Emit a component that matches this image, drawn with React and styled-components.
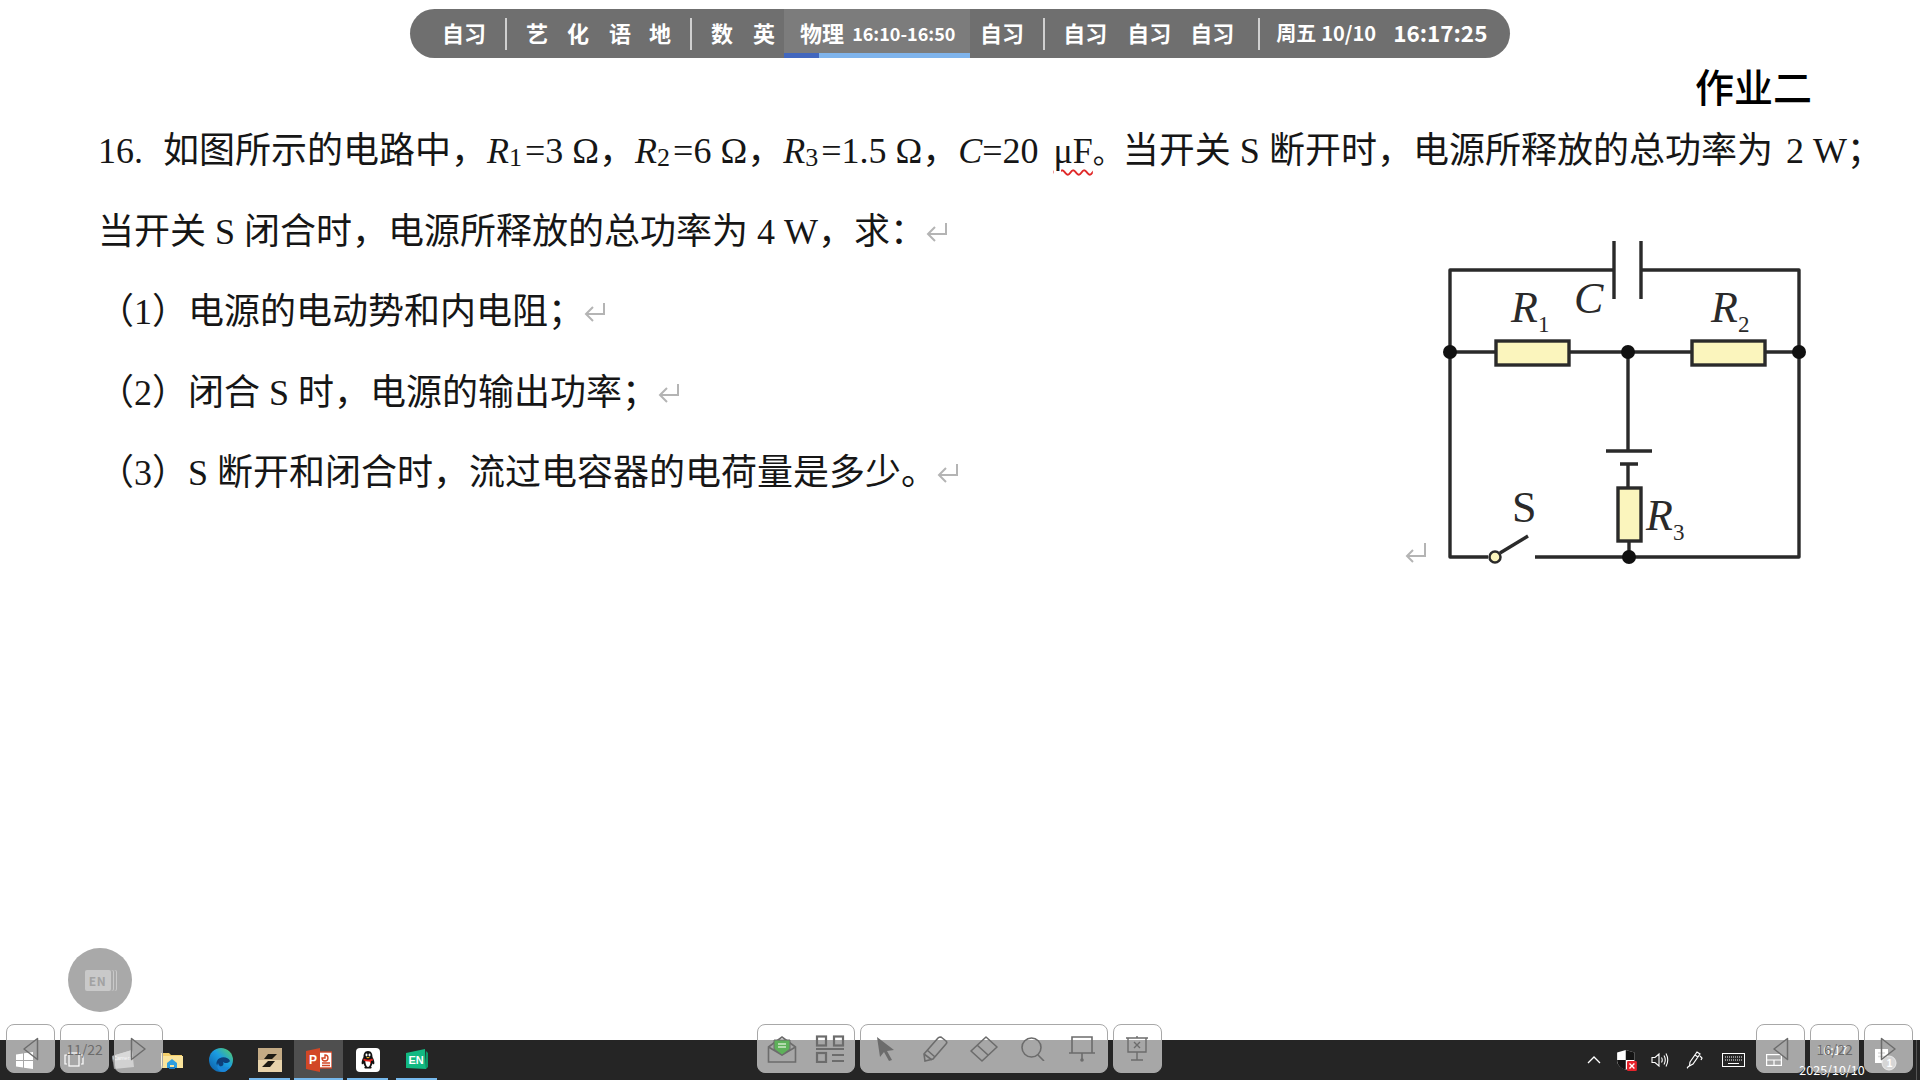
import React from 'react';
import styled, { createGlobalStyle } from 'styled-components';

const GlobalStyle = createGlobalStyle`
  html, body {
    margin: 0;
    padding: 0;
    background: #fff;
  }
  * {
    box-sizing: border-box;
  }
`;

const Page = styled.div`
  position: relative;
  display: flex;
  flex-direction: column;
  width: 1920px;
  height: 1080px;
  overflow: hidden;
  background: #fff;
  font-family: 'Liberation Serif', 'Noto Sans CJK SC', serif;
`;

/* schedule bar */
const ScheduleBar = styled.div`
  display: flex;
  align-items: center;
  align-self: center;
  flex: none;
  width: 1100px;
  height: 49px;
  margin-top: 9px;
  padding-left: 32px;
  border-radius: 25px;
  background: #6f6f6f;
  color: #fff;
  font-family: 'Noto Sans CJK SC', sans-serif;
  font-size: 22px;
  font-weight: 700;
  line-height: 47px;
  white-space: nowrap;
`;

const Subject = styled.span`
  display: block;
  flex: none;
  height: 49px;
  margin-left: ${(p) => p.$gap || 0}px;
`;

const Divider = styled.i`
  display: block;
  flex: none;
  width: 2px;
  height: 32px;
  margin: 0 ${(p) => p.$right || 19}px 0 ${(p) => p.$left || 19}px;
  background: #d0d0d0;
`;

const ActiveSlot = styled.div`
  position: relative;
  display: flex;
  align-items: center;
  flex: none;
  width: 186px;
  height: 100%;
  margin-left: 9px;
  padding-left: 16px;
  background: #7c7c7c;
`;

const SlotTime = styled.span`
  height: 49px;
  margin-left: 8px;
  font-size: 18px;
  line-height: 49px;
`;

const Progress = styled.div`
  position: absolute;
  left: 0;
  right: 0;
  bottom: 0;
  height: 5px;
  background: #7fb4ec;
`;

const ProgressDone = styled.div`
  height: 100%;
  background: #4267be;
`;

const DateText = styled.span`
  flex: none;
  height: 49px;
  margin-left: ${(p) => p.$gap || 0}px;
  font-size: ${(p) => p.$size || 20}px;
`;

/* slide content */
const Title = styled.div`
  flex: none;
  height: 48px;
  margin-top: 3px;
  padding-right: 108px;
  color: #000;
  font-family: 'Noto Sans CJK SC', sans-serif;
  font-size: 39px;
  font-weight: 500;
  line-height: 48px;
  text-align: right;
`;

const Question = styled.div`
  flex: none;
  padding-left: 98px;
  color: #161616;
  font-size: 36px;
`;

const QuestionLine = styled.div`
  display: flex;
  align-items: center;
  height: 80.2px;
  padding-top: 6px;
  white-space: pre;
`;

const LineText = styled.span`
  display: block;
  flex: none;
  line-height: 50px;
`;

const QuestionRow = styled.div`
  display: flex;
  align-items: flex-start;
`;

const QuestionList = styled.div`
  flex: none;
  width: 1282px;
`;

const Nudge = styled.span`
  display: inline-block;
  width: ${(p) => p.$width}px;
`;

const Var = styled.em`
  font-style: italic;
`;

const Sub = styled.span`
  position: relative;
  top: 3px;
  margin-right: 3px;
  font-size: 26px;
  line-height: 0;
`;

const Misspelt = styled.span`
  margin-left: 6px;
  text-decoration: underline wavy #e02828;
  text-decoration-thickness: 2px;
  text-underline-offset: 6px;
`;

const FullStop = styled.span`
  font-size: 30px;
`;

const ReturnIcon = styled.svg`
  flex: none;
  margin-left: -1px;
`;

const Figure = styled.svg`
  display: block;
  flex: none;
  margin-top: 31px;
`;

const Spacer = styled.div`
  flex: 1;
`;

/* taskbar */
const Taskbar = styled.div`
  display: flex;
  align-items: stretch;
  justify-content: space-between;
  flex: none;
  height: 40px;
  background: #252525;
`;

const TaskGroup = styled.div`
  display: flex;
  align-items: stretch;
`;

const TaskSlot = styled.div`
  position: relative;
  display: flex;
  align-items: center;
  justify-content: center;
  width: 49px;
  background: ${(p) => (p.$active ? '#4f4f4f' : 'transparent')};
`;

const RunningMark = styled.span`
  position: absolute;
  left: ${(p) => (p.$full ? 0 : 4)}px;
  right: ${(p) => (p.$full ? 0 : 4)}px;
  bottom: 0;
  height: 2px;
  background: #76b9ed;
`;

const TraySlot = styled.div`
  display: flex;
  align-items: center;
  justify-content: center;
  width: ${(p) => p.$width}px;
`;

const Clock = styled.div`
  display: flex;
  flex-direction: column;
  align-items: center;
  justify-content: center;
  width: 78px;
  color: #fff;
  font-family: 'Noto Sans CJK SC', sans-serif;
  font-size: 12.5px;
  line-height: 20px;
`;

const ShowDesktop = styled.div`
  display: flex;
  align-items: center;
  justify-content: flex-end;
  width: 46px;
  margin-right: 3px;
  padding-right: 15px;
  border-right: 1px solid #555;
`;

/* floating tools */
const Dock = styled.div`
  position: absolute;
  left: 6px;
  right: 7px;
  bottom: 7px;
  display: flex;
  justify-content: space-between;
`;

const DockCluster = styled.div`
  display: flex;
  gap: 5px;
`;

const DockGroup = styled.div`
  display: flex;
  align-items: center;
  height: 49px;
  border: 1px solid #a8a8a8;
  border-radius: 8px;
  background: rgba(255, 255, 255, 0.6);
`;

const DockCell = styled.div`
  display: flex;
  align-items: center;
  justify-content: center;
  width: ${(p) => p.$width || 47}px;
  height: 100%;
  color: #6c6c6c;
  font-family: 'Noto Sans CJK SC', sans-serif;
  font-size: 14px;
`;

const FloatBall = styled.div`
  position: absolute;
  left: 68px;
  top: 948px;
  display: flex;
  align-items: center;
  justify-content: center;
  width: 64px;
  height: 64px;
  border-radius: 50%;
  background: #a9a9a9;
`;

const BallCard = styled.div`
  display: flex;
  align-items: center;
  justify-content: center;
  width: 26px;
  height: 21px;
  margin-right: 5px;
  border-radius: 2px;
  background: #c9c9c9;
  box-shadow: 2px 0 0 #a9a9a9, 3px 0 0 #c9c9c9, 5px 0 0 #a9a9a9, 6px 0 0 #c9c9c9;
  color: #a2a2a2;
  font-family: 'Noto Sans CJK SC', sans-serif;
  font-size: 12px;
  font-weight: 700;
  letter-spacing: 0.5px;
`;

const ReturnMark = () => (
  <ReturnIcon width="24" height="22" viewBox="0 0 24 22" fill="none" stroke="#b4b4b4" strokeWidth="2">
    <path d="M21 2v11H4M10 6l-7 7 7 7" />
  </ReturnIcon>
);

const Circuit = () => (
  <Figure width="440" height="360" viewBox="0 0 440 360">
    <g fill="none" stroke="#2a2a2a" strokeWidth="3.4">
      <path d="M234 50H70V337H108M155 337H419V50H261" strokeLinejoin="round" />
      <path d="M234 21V79M261 21V79" />
      <path d="M70 132H116M189 132H312M385 132H419" />
      <path d="M248 132V230M226 231H272M240 244H258M248 244V268M249 321V337" />
      <path d="M120 333L148 316" />
    </g>
    <g fill="#fbf5bd" stroke="#2a2a2a" strokeWidth="3.4">
      <rect x="116" y="121" width="73" height="24" />
      <rect x="312" y="121" width="73" height="24" />
      <rect x="238" y="268" width="23" height="53" />
      <circle cx="115" cy="337" r="5.5" strokeWidth="2.5" />
    </g>
    <g fill="#111">
      <circle cx="70" cy="132" r="7" />
      <circle cx="248" cy="132" r="7" />
      <circle cx="419" cy="132" r="7" />
      <circle cx="249" cy="337" r="7" />
    </g>
    <g fill="#2a2a2a" fontFamily="'Liberation Serif', serif">
      <text x="131" y="102" fontSize="44" fontStyle="italic">R</text>
      <text x="158" y="112" fontSize="23">1</text>
      <text x="194" y="93" fontSize="44" fontStyle="italic">C</text>
      <text x="331" y="102" fontSize="44" fontStyle="italic">R</text>
      <text x="358" y="112" fontSize="23">2</text>
      <text x="132" y="302" fontSize="44">S</text>
      <text x="266" y="310" fontSize="44" fontStyle="italic">R</text>
      <text x="293" y="320" fontSize="23">3</text>
    </g>
    <path d="M45 323V336H27M33 330l-6 6 6 6" fill="none" stroke="#b4b4b4" strokeWidth="2" />
  </Figure>
);

const WindowsIcon = () => (
  <svg width="17" height="17" viewBox="0 0 17 17" fill="#fff">
    <path d="M0 2.6L7 1.4V8H0zM8 1.2L17 0V8H8zM0 9H7V15.6L0 14.4zM8 9H17V17L8 15.8z" />
  </svg>
);

const TaskViewIcon = () => (
  <svg width="20" height="16" viewBox="0 0 20 16" fill="none" stroke="#fff" strokeWidth="1.2">
    <rect x="5" y="1" width="10" height="13" />
    <path d="M3 3H1V12H3M17 3H19V12H17" />
  </svg>
);

const CameraIcon = () => (
  <svg width="24" height="20" viewBox="0 0 24 20">
    <path d="M1 6L21 0L23 17L3 19Z" fill="#8d8d8d" />
    <path d="M1 6L21 0L22 6L2 12Z" fill="#a0a0a0" />
    <text x="2" y="10" fontSize="5.5" fill="#eee" fontFamily="'Liberation Sans', sans-serif">Camera</text>
  </svg>
);

const FolderIcon = () => (
  <svg width="22" height="18" viewBox="0 0 22 18">
    <path d="M0 2H8L10 4H21V17H0Z" fill="#f4cf6b" />
    <path d="M0 5H22V17H0Z" fill="#fbe49b" />
    <path d="M6 17V12L11 8L16 12V17H13V14H9V17Z" fill="#2f9fe0" />
    <path d="M8 18H14V16H8Z" fill="#1b7cc4" />
  </svg>
);

const EdgeIcon = () => (
  <svg width="24" height="24" viewBox="0 0 24 24">
    <defs>
      <linearGradient id="edgeRing" x1="0" y1="1" x2="1" y2="0">
        <stop offset="0" stopColor="#0c59a4" />
        <stop offset="0.55" stopColor="#1b9de2" />
        <stop offset="1" stopColor="#5cd35a" />
      </linearGradient>
    </defs>
    <circle cx="12" cy="12" r="12" fill="url(#edgeRing)" />
    <path d="M8 13C10 8 19 8 21 13C19 16 15 15 14 14C16 18 11 20 8 17C7 16 7.5 14 8 13Z" fill="#0c3f7a" />
    <path d="M14 24C9 23 7 19 9 15C10 19 14 21 20 19C19 22 17 24 14 24Z" fill="#1a86d8" />
  </svg>
);

const SketchIcon = () => (
  <svg width="24" height="24" viewBox="0 0 24 24">
    <rect width="24" height="24" fill="#e8d3ab" />
    <rect width="24" height="12" fill="#c4ab85" />
    <path d="M10 6H19L14 11H6ZM10 13H17L12 19H4Z" fill="#1e1b14" />
  </svg>
);

const PowerPointIcon = () => (
  <svg width="26" height="24" viewBox="0 0 26 24">
    <rect x="13" y="4" width="13" height="16" fill="#fff" stroke="#d24726" strokeWidth="1.4" />
    <path d="M16 10a3 3 0 1 0 3-3v3zM16 15H24M16 17.5H24" fill="none" stroke="#d24726" strokeWidth="1.4" />
    <path d="M0 3L14 0V24L0 21Z" fill="#d24726" />
    <text x="3" y="16" fontSize="12" fontWeight="700" fill="#fff" fontFamily="'Liberation Sans', sans-serif">P</text>
  </svg>
);

const QQIcon = () => (
  <svg width="24" height="24" viewBox="0 0 24 24">
    <rect width="24" height="24" rx="4" fill="#fff" />
    <path d="M12 3C8.5 3 7.5 6 7.5 9C6 11.5 5 15 6 16.5L7.5 15.5C8 17 8.6 18 9 18.5C7.5 19.5 8.5 21 11 20.5H13C15.5 21 16.5 19.5 15 18.5C15.4 18 16 17 16.5 15.5L18 16.5C19 15 18 11.5 16.5 9C16.5 6 15.5 3 12 3Z" fill="#111" />
    <path d="M9.5 12C9 14 10 19 12 19C14 19 15 14 14.5 12Z" fill="#fff" />
    <path d="M7.5 10.5C10 12 14 12 16.5 10.5L17 12.5L15 13V16L13.5 13.5C11.5 13.8 9.5 13.5 7.5 12.5Z" fill="#e5231c" />
    <ellipse cx="10.5" cy="7" rx="1" ry="1.4" fill="#fff" />
    <ellipse cx="13.5" cy="7" rx="1" ry="1.4" fill="#fff" />
    <path d="M10 9H14L12 10.4Z" fill="#f5b81f" />
  </svg>
);

const EnIcon = () => (
  <svg width="24" height="22" viewBox="0 0 24 22">
    <path d="M21 2L23 4V18L21 20Z" fill="#0c9a68" />
    <path d="M1 4L20 0L21 20L1 19Z" fill="#12b981" />
    <text x="3.5" y="15" fontSize="11" fontWeight="700" fill="#fff" fontFamily="'Liberation Sans', sans-serif">EN</text>
  </svg>
);

const ChevronIcon = () => (
  <svg width="14" height="8" viewBox="0 0 14 8" fill="none" stroke="#fff" strokeWidth="1.3">
    <path d="M1 7L7 1L13 7" />
  </svg>
);

const ShieldIcon = () => (
  <svg width="20" height="21" viewBox="0 0 16 17">
    <path d="M7 0L14 2V9C14 12 11 15 7 16C3 15 0 12 0 9V2Z" fill="#fff" />
    <path d="M7 0V8H14V2ZM0 8H7V16C3 15 0 12 0 8Z" fill="#141414" />
    <rect x="8" y="9" width="8" height="8" rx="1" fill="#e5232b" />
    <path d="M10 11L14 15M14 11L10 15" stroke="#fff" strokeWidth="1.1" />
  </svg>
);

const VolumeIcon = () => (
  <svg width="18" height="16" viewBox="0 0 18 16" fill="none" stroke="#fff" strokeWidth="1.1">
    <path d="M1 5.5H4L8 2V14L4 10.5H1ZM10.5 5.5Q12 8 10.5 10.5M13 3.5Q15.5 8 13 12.5M15 1.5Q18.5 8 15 14.5" />
  </svg>
);

const PenIcon = () => (
  <svg width="18" height="18" viewBox="0 0 18 18" fill="none" stroke="#fff" strokeWidth="1.2">
    <path d="M4 11L11 1L14 3L7 13L3.5 15ZM9 4L12 6M14 5L16 7L15 9M3 15C1 17 1 17 2 17" />
  </svg>
);

const KeyboardIcon = () => (
  <svg width="23" height="14" viewBox="0 0 23 14" fill="none" stroke="#fff">
    <rect x="0.5" y="0.5" width="22" height="13" />
    <path d="M3 4H20M3 7H20" strokeDasharray="1 1" />
    <path d="M6 10.5H17" />
  </svg>
);

const PadIcon = () => (
  <svg width="16" height="12" viewBox="0 0 16 12" fill="none" stroke="#fff" strokeWidth="1.2">
    <rect x="0.6" y="0.6" width="14.8" height="10.8" />
    <path d="M0.6 6H15.4M8 6V11.4" />
  </svg>
);

const NotifyIcon = () => (
  <svg width="28" height="24" viewBox="0 0 28 24">
    <path d="M2 1H15V15H2Z" fill="#fff" />
    <path d="M5 5H12M5 8.5H12" stroke="#a8a8a8" strokeWidth="1.4" />
    <circle cx="16" cy="15" r="7" fill="#9a9a9a" stroke="#c8c8c8" />
    <text x="13.8" y="18.5" fontSize="10" fill="#fff" fontWeight="700" fontFamily="'Liberation Sans', sans-serif">1</text>
  </svg>
);

const ArrowTool = ({ flip }) => (
  <svg width="17" height="24" viewBox="0 0 17 24" fill="none" stroke="#6c6c6c" strokeWidth="1.5">
    <path d={flip ? 'M1.5 1.5L15 12L1.5 22.5Z' : 'M15.5 1.5L2 12L15.5 22.5Z'} strokeLinejoin="round" />
  </svg>
);

const MailTool = () => (
  <svg width="30" height="28" viewBox="0 0 30 28" fill="none" stroke="#6c6c6c" strokeWidth="1.6">
    <path d="M1.5 12L15 2L28.5 12V27H1.5Z" />
    <path d="M1.5 12L15 20L28.5 12" />
    <path d="M7 5H23V14L15 20L7 14Z" fill="#5eb15a" stroke="#6c6c6c" strokeWidth="1" />
    <path d="M11 9H19M11 12H19" stroke="#cfe8c9" strokeWidth="1.4" />
  </svg>
);

const GridTool = () => (
  <svg width="30" height="28" viewBox="0 0 30 28" fill="none" stroke="#6c6c6c" strokeWidth="2.2">
    <rect x="2" y="1.5" width="9" height="9" />
    <rect x="19" y="1.5" width="9" height="9" />
    <rect x="2" y="18" width="9" height="9" />
    <path d="M1 14H29M17 20H29M17 26H29" />
  </svg>
);

const CursorTool = () => (
  <svg width="20" height="26" viewBox="0 0 20 26" fill="#6c6c6c">
    <path d="M1 1L18 14L11 15L16 24L13 25L8 16L4 21Z" />
  </svg>
);

const PenTool = () => (
  <svg width="26" height="28" viewBox="0 0 26 28" fill="none" stroke="#6c6c6c" strokeWidth="1.6">
    <path d="M19 2L24 6C25 7 25 8 24 9L11 24L3 26L2 19L16 3C17 2 18 2 19 2ZM2 19L10 25M5 15L13 22" />
  </svg>
);

const EraserTool = () => (
  <svg width="28" height="26" viewBox="0 0 28 26" fill="none" stroke="#6c6c6c" strokeWidth="1.6">
    <path d="M16 1L27 11L12 25L1 15ZM7 9L18 19" strokeLinejoin="round" />
  </svg>
);

const SearchTool = () => (
  <svg width="24" height="24" viewBox="0 0 24 24" fill="none" stroke="#6c6c6c" strokeWidth="1.6">
    <circle cx="10.5" cy="10.5" r="9.5" />
    <path d="M17 18L23 24" />
  </svg>
);

const BoardTool = () => (
  <svg width="28" height="26" viewBox="0 0 28 26" fill="none" stroke="#6c6c6c" strokeWidth="1.6">
    <path d="M4 1H24V17H4ZM1 17H27M14 17V24" />
    <circle cx="14" cy="24" r="1" fill="#6c6c6c" />
  </svg>
);

const BoardCloseTool = () => (
  <svg width="24" height="26" viewBox="0 0 24 26" fill="none" stroke="#6c6c6c" strokeWidth="1.4">
    <path d="M1 2H23M3 2V16H21V2M12 16V24M6 24H18M12 0V2" />
    <path d="M9 6L15 12M15 6L9 12" />
  </svg>
);

const App = () => (
  <Page>
    <GlobalStyle />
    <ScheduleBar>
      <Subject>自习</Subject>
      <Divider />
      <Subject>艺</Subject>
      <Subject $gap={19}>化</Subject>
      <Subject $gap={20}>语</Subject>
      <Subject $gap={18}>地</Subject>
      <Divider />
      <Subject>数</Subject>
      <Subject $gap={20}>英</Subject>
      <ActiveSlot>
        <Subject>物理</Subject>
        <SlotTime>16:10-16:50</SlotTime>
        <Progress>
          <ProgressDone style={{ width: `${(7.42 / 40) * 100}%` }} />
        </Progress>
      </ActiveSlot>
      <Subject $gap={10}>自习</Subject>
      <Divider $right={18} />
      <Subject>自习</Subject>
      <Subject $gap={20}>自习</Subject>
      <Subject $gap={19}>自习</Subject>
      <Divider $left={24} $right={16} />
      <DateText $size={20}>周五</DateText>
      <DateText $gap={5} $size={20}>10/10</DateText>
      <DateText $gap={17} $size={22.5}>16:17:25</DateText>
    </ScheduleBar>

    <Title>作业二</Title>

    <Question>
      <QuestionLine>
        <LineText>
          16.<Nudge $width={20} />如图所示的电路中，<Var>R</Var><Sub>1</Sub>=3 Ω，<Var>R</Var><Sub>2</Sub>=6 Ω，<Var>R</Var><Sub>3</Sub>=1.5 Ω，<Var>C</Var>=20 <Misspelt>μF</Misspelt><FullStop>。</FullStop>当开关 S 断开时，电源所释放的总功率为<Nudge $width={4} /> 2 W；
        </LineText>
      </QuestionLine>
      <QuestionRow>
        <QuestionList>
          <QuestionLine>
            <LineText>当开关 S 闭合时，电源所释放的总功率为 4 W，求：</LineText>
            <ReturnMark />
          </QuestionLine>
          <QuestionLine>
            <LineText>（1）电源的电动势和内电阻；</LineText>
            <ReturnMark />
          </QuestionLine>
          <QuestionLine>
            <LineText>（2）闭合 S 时，电源的输出功率；</LineText>
            <ReturnMark />
          </QuestionLine>
          <QuestionLine>
            <LineText>（3）S 断开和闭合时，流过电容器的电荷量是多少。</LineText>
            <ReturnMark />
          </QuestionLine>
        </QuestionList>
        <Circuit />
      </QuestionRow>
    </Question>

    <Spacer />

    <Taskbar>
      <TaskGroup>
        <TaskSlot><WindowsIcon /></TaskSlot>
        <TaskSlot><TaskViewIcon /></TaskSlot>
        <TaskSlot><CameraIcon /></TaskSlot>
        <TaskSlot><FolderIcon /></TaskSlot>
        <TaskSlot><EdgeIcon /></TaskSlot>
        <TaskSlot><SketchIcon /><RunningMark /></TaskSlot>
        <TaskSlot $active><PowerPointIcon /><RunningMark $full /></TaskSlot>
        <TaskSlot><QQIcon /><RunningMark /></TaskSlot>
        <TaskSlot><EnIcon /><RunningMark /></TaskSlot>
      </TaskGroup>
      <TaskGroup>
        <TraySlot $width={33}><ChevronIcon /></TraySlot>
        <TraySlot $width={33}><ShieldIcon /></TraySlot>
        <TraySlot $width={33}><VolumeIcon /></TraySlot>
        <TraySlot $width={37}><PenIcon /></TraySlot>
        <TraySlot $width={41}><KeyboardIcon /></TraySlot>
        <TraySlot $width={39}><PadIcon /></TraySlot>
        <Clock>
          <span>16:17</span>
          <span>2025/10/10</span>
        </Clock>
        <ShowDesktop><NotifyIcon /></ShowDesktop>
      </TaskGroup>
    </Taskbar>

    <FloatBall>
      <BallCard>EN</BallCard>
    </FloatBall>

    <Dock>
      <DockCluster>
        <DockGroup><DockCell><ArrowTool /></DockCell></DockGroup>
        <DockGroup><DockCell>11/22</DockCell></DockGroup>
        <DockGroup><DockCell><ArrowTool flip /></DockCell></DockGroup>
      </DockCluster>
      <DockCluster>
        <DockGroup>
          <DockCell $width={48}><MailTool /></DockCell>
          <DockCell $width={48}><GridTool /></DockCell>
        </DockGroup>
        <DockGroup>
          <DockCell $width={49.2}><CursorTool /></DockCell>
          <DockCell $width={49.2}><PenTool /></DockCell>
          <DockCell $width={49.2}><EraserTool /></DockCell>
          <DockCell $width={49.2}><SearchTool /></DockCell>
          <DockCell $width={49.2}><BoardTool /></DockCell>
        </DockGroup>
        <DockGroup><DockCell><BoardCloseTool /></DockCell></DockGroup>
      </DockCluster>
      <DockCluster>
        <DockGroup><DockCell><ArrowTool /></DockCell></DockGroup>
        <DockGroup><DockCell>16/22</DockCell></DockGroup>
        <DockGroup><DockCell><ArrowTool flip /></DockCell></DockGroup>
      </DockCluster>
    </Dock>
  </Page>
);

export default App;
